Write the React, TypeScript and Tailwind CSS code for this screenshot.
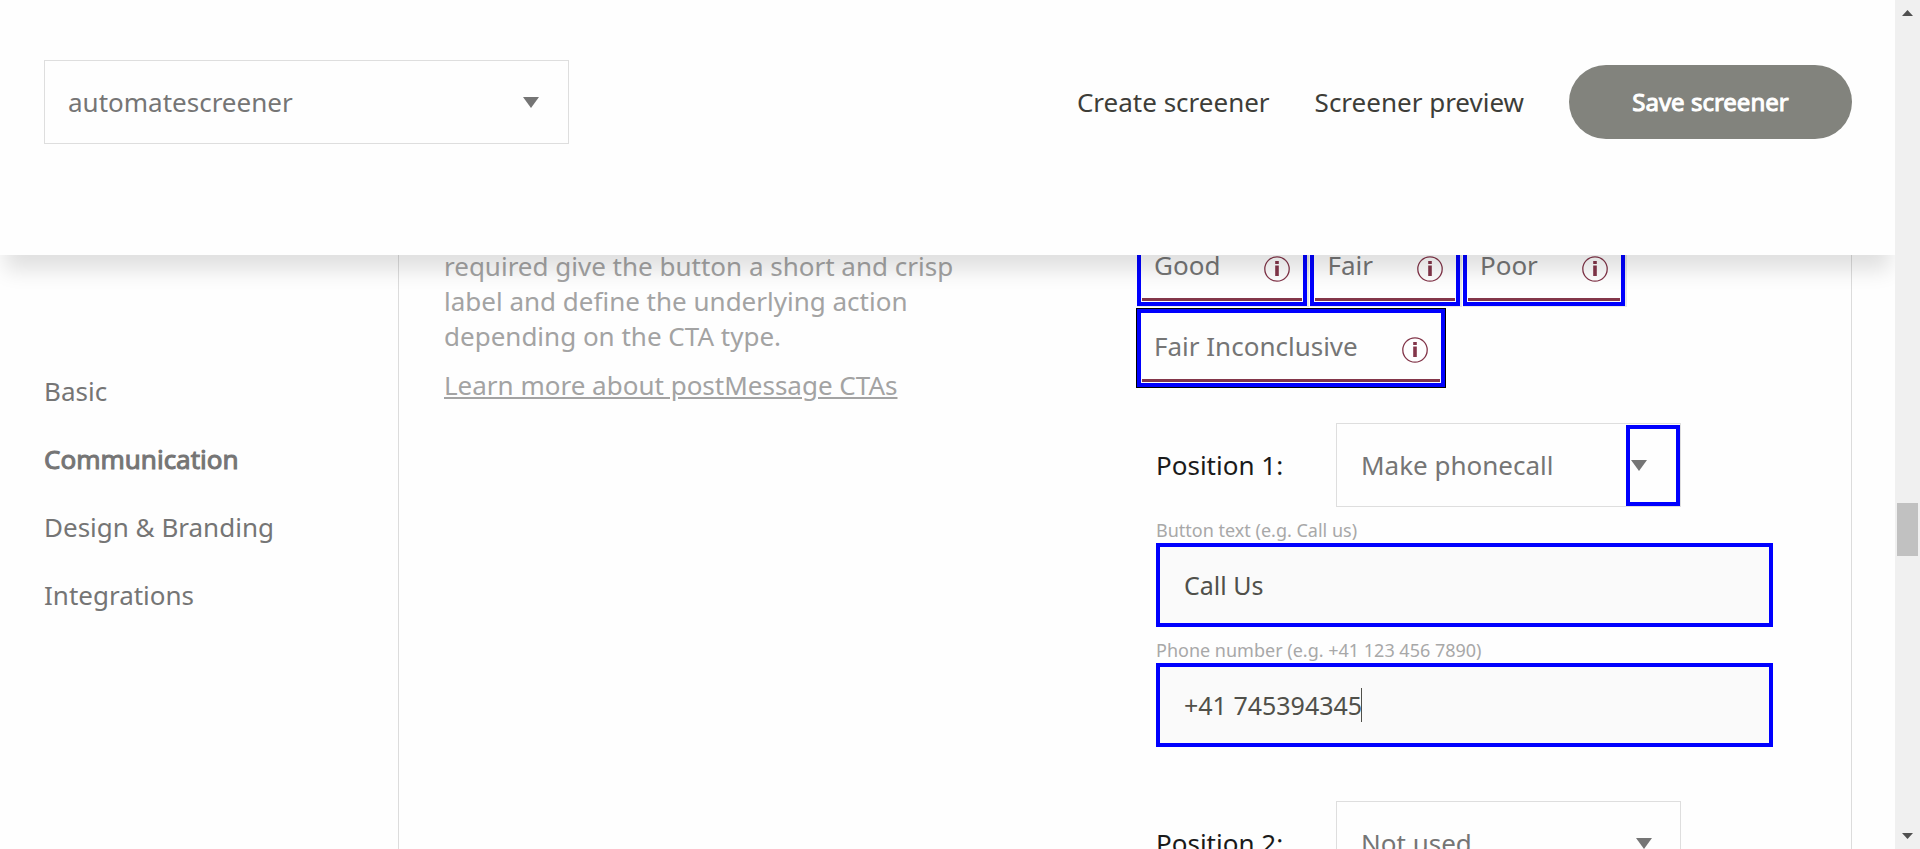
import React, { useState } from "react";

function Caret() {
  return (
    <svg viewBox="0 0 16 11" className="h-[11px] w-4" aria-hidden="true">
      <path d="M0 0h16L8 11z" fill="#757575" />
    </svg>
  );
}

function InfoIcon() {
  return (
    <svg viewBox="0 0 26 26" className="mt-1.5 size-[26px] shrink-0" aria-hidden="true">
      <circle cx="13" cy="13" r="12.2" fill="none" stroke="#83364a" strokeWidth="1.3" />
      <path d="M11.2 5h3.6v3h-3.6zM11.2 9.5h3.6V20h-3.6z" fill="#83364a" />
    </svg>
  );
}

function Tab({ label, selected, onClick }: { label: string; selected: boolean; onClick: () => void }) {
  return (
    <button
      type="button"
      role="tab"
      aria-selected={selected}
      onClick={onClick}
      className={
        "h-[78px] border-4 border-[#0000fe] bg-transparent p-px outline-none " +
        (selected ? "shadow-[0_0_0_1px_#000]" : "shadow-[1px_0_0_1px_#e8e8e8]")
      }
    >
      <span className="flex h-full items-center gap-11 border-b-[3px] border-[#83364a] px-3 text-[#757575]">
        {label}
        <InfoIcon />
      </span>
    </button>
  );
}

function ActionSelect({ id, options, marked }: { id: string; options: string[]; marked?: boolean }) {
  return (
    <div className="relative w-[345px]">
      <select
        id={id}
        className="h-[84px] w-full appearance-none rounded-none border border-[#dedede] bg-transparent pl-6 text-[#757575] outline-none"
      >
        {options.map((o) => (
          <option key={o}>{o}</option>
        ))}
      </select>
      {marked ? (
        <span className="pointer-events-none absolute right-px top-0.5 flex h-[81px] w-[54px] items-center border-4 border-[#0000fe] pl-px">
          <Caret />
        </span>
      ) : (
        <span className="pointer-events-none absolute inset-y-0 right-[29px] flex items-center">
          <Caret />
        </span>
      )}
    </div>
  );
}

function Field({ id, label, value, focus }: { id: string; label: string; value: string; focus?: boolean }) {
  return (
    <div className="flex flex-col">
      <label htmlFor={id} className="flex h-9 items-center pt-2.5 text-lg leading-[26px] text-[#a8a8a8]">
        {label}
      </label>
      <div className="relative">
        <input
          id={id}
          defaultValue={value}
          className="block h-[84px] w-full rounded-none border-4 border-[#0000fe] bg-[#fafafa] px-6 text-[25px] text-[#50504a] outline-none"
        />
        {focus && <span className="pointer-events-none absolute left-[205px] top-[25px] h-[34px] w-px bg-[#50504a]" />}
      </div>
    </div>
  );
}

const sections = ["Basic", "Communication", "Design & Branding", "Integrations"];
const results = ["Good", "Fair", "Poor", "Fair Inconclusive"];

export default function App() {
  const [tab, setTab] = useState("Fair Inconclusive");
  return (
    <div className="flex h-screen overflow-hidden bg-[#fefefe] font-['Noto_Sans',sans-serif] text-[26px] leading-[35px]">
      <div className="flex min-w-0 flex-1 flex-col">
        <header className="z-10 flex h-[255px] shrink-0 items-start justify-between bg-[#fefefe] pl-11 pr-[43px] pt-[60px] shadow-[0_20px_20px_-5px_rgba(0,0,0,0.12)]">
          <div className="relative w-[525px]">
            <select
              aria-label="Screener"
              className="h-[84px] w-full appearance-none rounded-none border border-[#dedede] bg-transparent pl-[23px] text-[#757575] outline-none"
            >
              <option>automatescreener</option>
            </select>
            <span className="pointer-events-none absolute inset-y-0 right-[30px] flex items-center">
              <Caret />
            </span>
          </div>
          <nav className="flex h-[84px] items-center gap-[45px] text-[#3d3d38]">
            <a href="#create">Create screener</a>
            <a href="#preview">Screener preview</a>
            <button
              type="button"
              className="h-[74px] w-[283px] rounded-full bg-[#82837d] text-2xl text-white [-webkit-text-stroke:1px_#fff]"
            >
              Save screener
            </button>
          </nav>
        </header>

        <main className="flex min-h-0 flex-1">
          <nav className="flex w-[398px] shrink-0 flex-col gap-[33px] pl-11 pt-[119px] text-[#757575]">
            {sections.map((s) => (
              <a
                key={s}
                href={"#" + s}
                className={s === "Communication" ? "[-webkit-text-stroke:1px_#757575]" : ""}
              >
                {s}
              </a>
            ))}
          </nav>
          <section className="mr-[43px] flex min-w-0 flex-1 justify-between border-x border-[#dcdcdc] pl-[45px]">
            <div className="w-[540px] text-[#a3a3a3]">
              <p className="-mt-1.5">
                required give the button a short and crisp label and define the underlying action depending on the CTA
                type.
              </p>
              <a href="#learn" className="mt-3.5 inline-block underline">
                Learn more about postMessage CTAs
              </a>
            </div>
            <div className="-mt-[27px] w-[714px] shrink-0">
              <div role="tablist" className="flex w-[500px] flex-wrap gap-[3px]">
                {results.map((r) => (
                  <Tab key={r} label={r} selected={r === tab} onClick={() => setTab(r)} />
                ))}
              </div>
              <div className="ml-[19px] mr-[78px]">
                <div className="mt-9 flex items-center">
                  <label htmlFor="p1" className="w-[180px] text-[#1a1a1a]">
                    Position 1:
                  </label>
                  <ActionSelect id="p1" options={["Make phonecall", "Not used"]} marked />
                </div>
                <Field id="text" label="Button text (e.g. Call us)" value="Call Us" />
                <Field id="phone" label="Phone number (e.g. +41 123 456 7890)" value="+41 745394345" focus />
                <div className="mt-[54px] flex items-center">
                  <label htmlFor="p2" className="w-[180px] text-[#1a1a1a]">
                    Position 2:
                  </label>
                  <ActionSelect id="p2" options={["Not used", "Make phonecall"]} />
                </div>
              </div>
            </div>
          </section>
        </main>
      </div>

      <div className="z-20 flex w-[25px] shrink-0 flex-col items-center bg-[#f0f0f0] py-2.5" aria-hidden="true">
        <svg viewBox="0 0 11 6" className="h-1.5 w-[11px]">
          <path d="M0 6h11L5.5 0z" fill="#505050" />
        </svg>
        <div className="mt-[487px] h-[53px] w-[21px] bg-[#c1c1c1]" />
        <svg viewBox="0 0 11 6" className="mt-auto h-1.5 w-[11px]">
          <path d="M0 0h11L5.5 6z" fill="#505050" />
        </svg>
      </div>
    </div>
  );
}
